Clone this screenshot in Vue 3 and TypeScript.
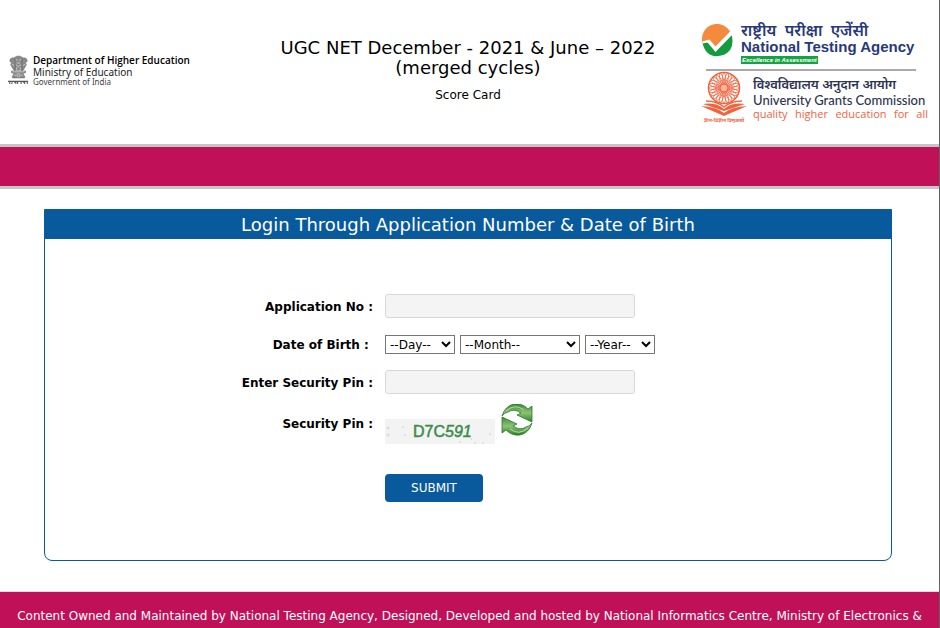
<script setup lang="ts">
import { ref } from 'vue'

const applicationNo = ref('')
const day = ref('')
const month = ref('')
const year = ref('')
const securityPin = ref('')
const captcha = ref('D7C591')

const rays: number[] = Array.from({ length: 24 }, (_, i) => i * 15)
const days: number[] = Array.from({ length: 31 }, (_, i) => i + 1)
const months: string[] = ['January', 'February', 'March', 'April', 'May', 'June', 'July', 'August', 'September', 'October', 'November', 'December']
const years: number[] = Array.from({ length: 60 }, (_, i) => 2005 - i)

function refreshPin(): void {
  const chars = 'ABCDEFGHJKLMNPQRSTUVWXYZ0123456789'
  captcha.value = Array.from({ length: 6 }, () => chars[Math.floor(Math.random() * chars.length)]).join('')
}
</script>

<template>
  <div class="page">
    <header class="masthead">
      <div class="department">
        <svg class="emblem" viewBox="0 0 24 34" aria-hidden="true">
          <g fill="#8b8b8b" stroke="#5f5f5f" stroke-width=".6">
            <path d="M7 3Q12-1 17 3L18 7 16 12 17 17H7L8 12 6 7Z" />
            <path d="M6 3Q2 3 2 7L4 8 3 11 6 16 8 18 8 6Z" />
            <path d="M18 3Q22 3 22 7L20 8 21 11 18 16 16 18 16 6Z" />
            <path d="M4 18H20V20L17 21 19 24V26H5V24L7 21 4 20Z" />
          </g>
          <g fill="none" stroke="#ddd" stroke-width=".8">
            <path d="M9 5 11 6M13 6 15 5M10 9H14M9 11 12 13 15 11M4 10 7 12M20 10 17 12M10 14V17M14 14V17M5 19H19" />
            <circle cx="12" cy="23" r="1.8" /><path d="M7 23H9M15 23H17" />
          </g>
          <path d="M0 30H23M2 30V33M5 31 4 33M7 31H9V33M11 30V33M15 30V33M17 31H19V33M22 30V33" fill="none" stroke="#555" stroke-width="1.200" />
        </svg>
        <div>
          <div class="department-name">Department of Higher Education</div>
          <div class="ministry">Ministry of Education</div>
          <div class="government">Government of India</div>
        </div>
      </div>

      <div class="heading">
        <h1>UGC NET December - 2021 &amp; June – 2022<br>(merged cycles)</h1>
        <p>Score Card</p>
      </div>

      <div class="agencies">
        <div class="agency nta">
          <svg class="nta-mark" viewBox="0 0 32 33" aria-hidden="true">
            <path d="M1 19A15 15 0 1 1 30 11L14 25 7 16Z" fill="#f58a3c" />
            <path d="M1 19 7 18 14 25 30 10Q34 26 22 31Q5 36 1 19Z" fill="#139b3f" />
            <path d="M1 17.500 8 15.500 14 22.500 29 7 31 10.500 14 28 6 18.500 1 19.500Z" fill="#fff" />
          </svg>
          <div>
            <div class="nta-hindi">राष्ट्रीय&nbsp; परीक्षा&nbsp; एजेंसी</div>
            <div class="nta-name">National Testing Agency</div>
            <div class="nta-motto">Excellence in Assessment</div>
          </div>
        </div>
        <div class="agency ugc">
          <svg class="ugc-mark" viewBox="0 0 46 52" aria-hidden="true">
            <g fill="none" stroke="#f0643f">
              <circle cx="23" cy="17" r="15.500" stroke-width="1.500" />
              <ellipse v-for="angle in rays" :key="angle" cx="23" cy="8" rx="1.700" ry="6" stroke-width=".8" :transform="`rotate(${angle} 23 17)`" />
            </g>
            <circle cx="23" cy="17" r="4" fill="#f9b29e" stroke="#f0643f" />
            <path d="M2 33Q15 31 23 38Q31 31 44 33L23 40Z" fill="#f0643f" />
            <path d="M0 35Q16 36 23 42Q30 36 46 35L23 45Z" fill="#f0643f" />
            <path d="M5 30Q16 30 23 36Q30 30 41 30" fill="none" stroke="#f0643f" stroke-width="1.500" />
            <text x="23" y="51" text-anchor="middle" class="ugc-motto">ज्ञान-विज्ञान विमुक्तये</text>
          </svg>
          <div>
            <div class="ugc-hindi">विश्वविद्यालय अनुदान आयोग</div>
            <div class="ugc-name">University Grants Commission</div>
            <div class="ugc-tagline"><span>quality</span> <span>higher</span> <span>education</span> <span>for</span> <span>all</span></div>
          </div>
        </div>
      </div>
    </header>

    <div class="band"></div>

    <main class="content">
      <section class="panel">
        <h2>Login Through Application Number &amp; Date of Birth</h2>
        <form @submit.prevent>
          <label for="application-no">Application No :</label>
          <div class="field"><input id="application-no" v-model="applicationNo" type="text"></div>

          <label for="birth-day">Date of Birth :&nbsp;</label>
          <div class="field dates">
            <select id="birth-day" v-model="day" class="short">
              <option value="">--Day--</option>
              <option v-for="d in days" :key="d" :value="d">{{ d }}</option>
            </select>
            <select v-model="month" class="long" aria-label="Month of birth">
              <option value="">--Month--</option>
              <option v-for="m in months" :key="m" :value="m">{{ m }}</option>
            </select>
            <select v-model="year" class="short" aria-label="Year of birth">
              <option value="">--Year--</option>
              <option v-for="y in years" :key="y" :value="y">{{ y }}</option>
            </select>
          </div>

          <label for="security-pin">Enter Security Pin :</label>
          <div class="field"><input id="security-pin" v-model="securityPin" type="text" autocomplete="off"></div>

          <span class="caption">Security Pin :</span>
          <div class="field captcha">
            <svg class="captcha-code" viewBox="0 0 110 25" role="img" aria-label="Security pin">
              <rect width="110" height="25" fill="#f3f3f3" />
              <g fill="#dcdcdc">
                <circle cx="3" cy="9" r="1.500" /><circle cx="3" cy="16" r="1.500" /><circle cx="18" cy="8" r="1" />
                <circle cx="20" cy="16" r="1" /><circle cx="75" cy="23" r="1" /><circle cx="90" cy="24" r="1" />
                <circle cx="98" cy="24" r="1" /><circle cx="105" cy="15" r="1" /><circle cx="86" cy="20" r="1" />
              </g>
              <text x="28" y="18">{{ captcha.slice(0, 3) }}<tspan class="slanted">{{ captcha.slice(3) }}</tspan></text>
            </svg>
            <button type="button" class="refresh" aria-label="Refresh security pin" @click="refreshPin">
              <svg viewBox="0 0 32 32" aria-hidden="true">
                <defs>
                  <linearGradient id="leaf" x1="0" y1="0" x2="0" y2="1">
                    <stop offset="0" stop-color="#3b8a37" />
                    <stop offset=".5" stop-color="#8cc474" />
                    <stop offset="1" stop-color="#2f7f2e" />
                  </linearGradient>
                </defs>
                <g fill="url(#leaf)" stroke="#2f7530" stroke-width=".8" stroke-linejoin="round">
                  <path d="M1 12Q4 2 13 0Q21-1 27 5L31 2V18L16 11 20 9Q13 4 7 8Q3 9 1 12Z" />
                  <path d="M31 19Q28 29 19 31Q11 32 5 26L1 29V13L16 20 12 22Q19 27 25 23Q29 22 31 19Z" />
                </g>
                <path d="M5 7Q14-1 23 6M27 24Q18 32 9 25" fill="none" stroke="#b9dca8" />
              </svg>
            </button>
          </div>

          <button type="submit" class="submit">SUBMIT</button>
        </form>
      </section>
    </main>

    <footer>Content Owned and Maintained by National Testing Agency, Designed, Developed and hosted by National Informatics Centre, Ministry of Electronics &amp;</footer>
  </div>
</template>

<style>
body {
  margin: 0;
  background: #fff;
}
</style>

<style scoped>
.page {
  box-sizing: border-box;
  display: flex;
  flex-direction: column;
  min-height: 100vh;
  border-right: 1px solid #606060;
  font-family: Verdana, "DejaVu Sans", sans-serif;
  font-size: 12px;
  color: #000;
}

.masthead {
  box-sizing: border-box;
  display: grid;
  grid-template-columns: 1fr auto 1fr;
  align-items: start;
  min-height: 144px;
  padding: 22px 11px 20px 8px;
}

.department {
  display: flex;
  gap: 4px;
  padding-top: 31px;
  font-family: "Noto Sans", sans-serif;
  white-space: nowrap;
}

.emblem {
  width: 21px;
  height: 34px;
}

.department-name {
  font-family: "Open Sans", sans-serif;
  font-size: 10px;
  font-weight: 600;
  line-height: 14px;
}

.ministry {
  font-size: 10px;
  line-height: 10px;
  color: #222;
}

.government {
  font-size: 8px;
  line-height: 10px;
  color: #444;
}

.heading {
  padding-top: 16px;
  text-align: center;
}

h1 {
  margin: 0;
  font-size: 18px;
  font-weight: 400;
  line-height: 20px;
}

.heading p {
  margin: 9px 0 0;
  line-height: 16px;
}

.agencies {
  justify-self: end;
  white-space: nowrap;
}

.agency {
  display: flex;
}

.nta {
  gap: 7px;
  color: #27397b;
}

.nta-mark {
  width: 33px;
  height: 33px;
  margin-top: 2px;
}

.nta-hindi {
  font-family: "Noto Sans", sans-serif;
  font-size: 16px;
  font-weight: 600;
  line-height: 16px;
}

.nta-name {
  font-family: "Liberation Sans", Arial, sans-serif;
  font-size: 15px;
  font-weight: 700;
  line-height: 18px;
}

.nta-motto {
  width: max-content;
  padding: 0 1px;
  background: #15a344;
  font-family: "Liberation Sans", Arial, sans-serif;
  font-size: 6px;
  font-style: italic;
  font-weight: 700;
  line-height: 8px;
  color: #fff;
}

.ugc {
  gap: 6px;
  margin-top: 5px;
  position: relative;
}

.ugc::before {
  content: "";
  position: absolute;
  top: 0;
  left: 5px;
  right: 12px;
  height: 2px;
  background: #aaa;
}

.ugc-mark {
  width: 46px;
  height: 52px;
  margin-top: 2px;
}

.ugc-motto {
  font: 700 5px "Noto Sans", sans-serif;
  fill: #f0643f;
}

.ugc-hindi {
  padding-top: 8px;
  font-family: "Noto Sans", sans-serif;
  font-size: 13px;
  font-weight: 600;
  line-height: 15px;
  color: #2c3452;
}

.ugc-name {
  min-width: 175px;
  font-family: Lato, sans-serif;
  font-size: 13px;
  font-weight: 500;
  line-height: 16px;
  color: #2c3452;
}

.ugc-tagline {
  display: flex;
  justify-content: space-between;
  font-family: "Open Sans", sans-serif;
  font-size: 11px;
  line-height: 12px;
  color: #f0643f;
}

.band {
  box-sizing: border-box;
  height: 45px;
  border: solid #c6c6c6;
  border-width: 3px 0;
  background: #bf1058;
}

.content {
  padding: 20px 47px 30px 44px;
}

.panel {
  border: 1px solid #085a9d;
  border-radius: 0 0 8px 8px;
}

h2 {
  margin: 0;
  background: #085a9d;
  font-size: 18px;
  font-weight: 400;
  line-height: 29px;
  text-align: center;
  color: #fff;
}

form {
  display: grid;
  grid-template-columns: 59fr 91fr;
  grid-auto-rows: minmax(32px, auto);
  align-items: center;
  gap: 6px 12px;
  padding: 51px 0 58px;
}

label,
.caption {
  font-weight: 700;
  text-align: right;
}

label {
  padding-top: 2px;
}

.field {
  display: flex;
}

input {
  box-sizing: border-box;
  width: 250px;
  height: 24px;
  padding: 2px 6px;
  border: 1px solid #d8d8d8;
  border-radius: 3px;
  background: #f4f4f4;
  font: inherit;
}

.dates {
  gap: 5px;
}

select {
  box-sizing: border-box;
  height: 19px;
  padding: 1px 0 0;
  border: 1px solid #767676;
  border-radius: 0;
  background-color: #fff;
  font: inherit;
  color: #000;
}

.short {
  width: 70px;
}

.long {
  width: 120px;
}

.captcha {
  gap: 6px;
  height: 40px;
}

.captcha-code {
  align-self: flex-end;
  width: 110px;
  height: 25px;
}

.captcha-code text {
  font: 16px "Liberation Sans", Arial, sans-serif;
  fill: #3b8d4a;
  stroke: #3b8d4a;
  stroke-width: .5px;
}

.slanted {
  font-style: italic;
}

.refresh {
  width: 32px;
  height: 32px;
  padding: 0;
  border: 0;
  background: none;
  cursor: pointer;
}

.refresh svg {
  display: block;
}

.submit {
  grid-column: 2;
  justify-self: start;
  width: 98px;
  height: 28px;
  margin-top: 24px;
  border: 0;
  border-radius: 4px;
  background: #085a9d;
  font: inherit;
  color: #fff;
  cursor: pointer;
}

footer {
  flex: 1;
  padding: 16px 15px 5px;
  border-top: 1px solid #e6d5dd;
  background: #bf1058;
  line-height: 16px;
  text-align: center;
  color: #fff;
}
</style>
